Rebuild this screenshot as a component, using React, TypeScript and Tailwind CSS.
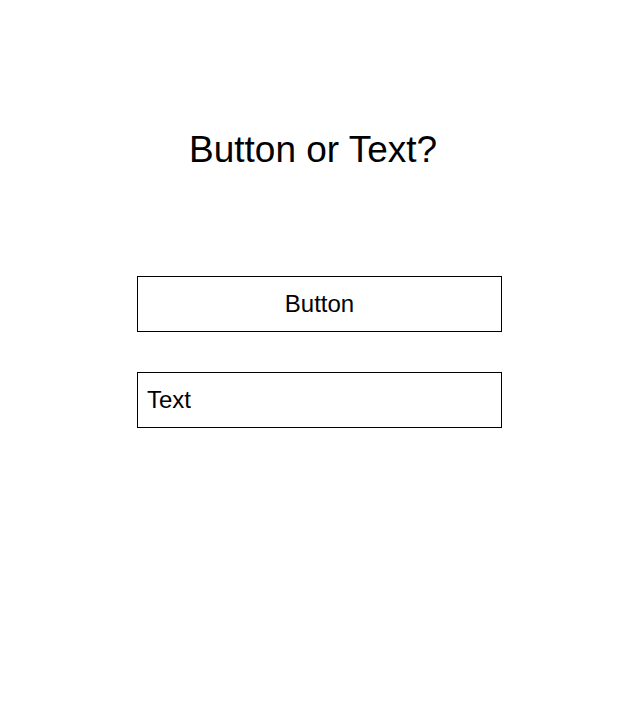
import React from 'react';

export default function App() {
  return (
    <div className="min-h-[702px] w-full bg-white text-black" style={{ fontFamily: '"Liberation Sans", Arial, sans-serif' }}>
      {/* Heading */}
      <h1 className="pt-[129px] pl-[189px] text-[37px] leading-[42px] font-normal">Button or Text?</h1>

      <div className="mt-[105px] ml-[137px] flex flex-col gap-[40px]">
        <button className="w-[365px] h-[56px] border border-black bg-white text-[24px] text-center">
          Button
        </button>
        <div className="w-[365px] h-[56px] border border-black flex items-center pl-[9px] text-[24px]">
          Text
        </div>
      </div>
    </div>
  );
}
